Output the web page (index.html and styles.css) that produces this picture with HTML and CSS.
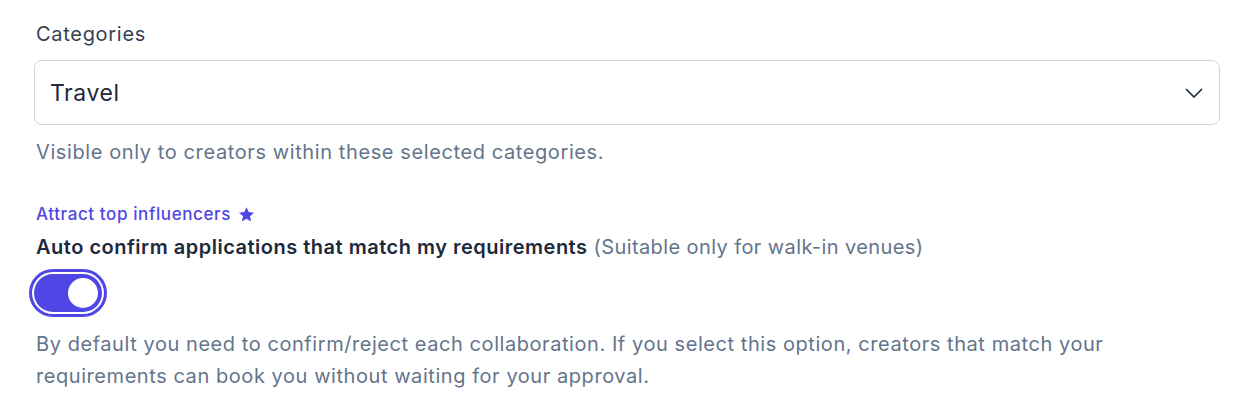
FILE: index.html
```html
<!DOCTYPE html>
<html>
<head>
<meta charset="utf-8">
<link rel="stylesheet" href="styles.css">
</head>
<body>
<div class="form">
  <label class="label">Categories</label>
  <div class="select">
    <span class="select-value">Travel</span>
    <svg class="chevron" width="24" height="24" viewBox="0 0 24 24" fill="none"><path d="M4.5 8.5l7.5 7.5 7.5-7.5" stroke="#1e293b" stroke-width="1.7" stroke-linecap="round" stroke-linejoin="round"/></svg>
  </div>
  <p class="help">Visible only to creators within these selected categories.</p>

  <div class="badge">Attract top influencers
    <svg class="star" width="17" height="17" viewBox="0 0 20 20"><path fill="#4f46e5" d="M10 1.5l2.6 5.7 6.2.6-4.7 4.2 1.4 6.1-5.5-3.2-5.5 3.2 1.4-6.1L1.2 7.8l6.2-.6z"/></svg>
  </div>
  <div class="title"><strong>Auto confirm applications that match my requirements</strong> <span class="muted">(Suitable only for walk-in venues)</span></div>
  <div class="toggle"><span class="knob"></span></div>
  <p class="desc">By default you need to confirm/reject each collaboration. If you select this option, creators that match your requirements can book you without waiting for your approval.</p>
</div>
</body>
</html>
```

FILE: styles.css
```css
* { box-sizing: border-box; }
body {
  margin: 0;
  background: #ffffff;
  font-family: Inter, "Noto Sans", sans-serif;
}
.form {
  width: 1186px;
  margin-left: 34px;
  padding-top: 20px;
  display: flex;
  flex-direction: column;
  align-items: flex-start;
}
.label {
  display: block;
  font-size: 20px;
  line-height: 28px;
  letter-spacing: 0.7px;
  color: #334155;
  padding-left: 2px;
}
.select {
  margin-top: 12px;
  width: 100%;
  height: 65px;
  border: 1px solid #cbd5e1;
  border-radius: 8px;
  display: flex;
  align-items: center;
  justify-content: space-between;
  padding: 0 13px 0 15px;
}
.select-value {
  font-size: 23px;
  letter-spacing: 0.55px;
  color: #1e293b;
}
.help {
  margin: 13px 0 0 2px;
  font-size: 20px;
  line-height: 28px;
  letter-spacing: 0.6px;
  color: #64748b;
}
.badge {
  margin: 36px 0 0 2px;
  display: flex;
  align-items: center;
  gap: 7px;
  font-size: 17px;
  line-height: 24px;
  letter-spacing: 0.6px;
  font-weight: 500;
  color: #4f46e5;
}
.title {
  margin: 7px 0 0 2px;
  font-size: 20px;
  line-height: 28px;
  letter-spacing: 0.4px;
  color: #64748b;
}
.title strong {
  font-weight: 600;
  letter-spacing: 0.5px;
  color: #1e293b;
}
.toggle {
  margin-top: 13px;
  width: 68px;
  height: 38px;
  border-radius: 19px;
  background: #4f46e5;
  box-shadow: 0 0 0 2px #ffffff, 0 0 0 5px #4f46e5;
  padding: 4px;
  display: flex;
  justify-content: flex-end;
}
.knob {
  width: 30px;
  height: 30px;
  border-radius: 50%;
  background: #ffffff;
}
.desc {
  margin: 16px 0 0 2px;
  font-size: 20px;
  line-height: 32px;
  letter-spacing: 0.56px;
  color: #64748b;
  max-width: 1100px;
}
```
